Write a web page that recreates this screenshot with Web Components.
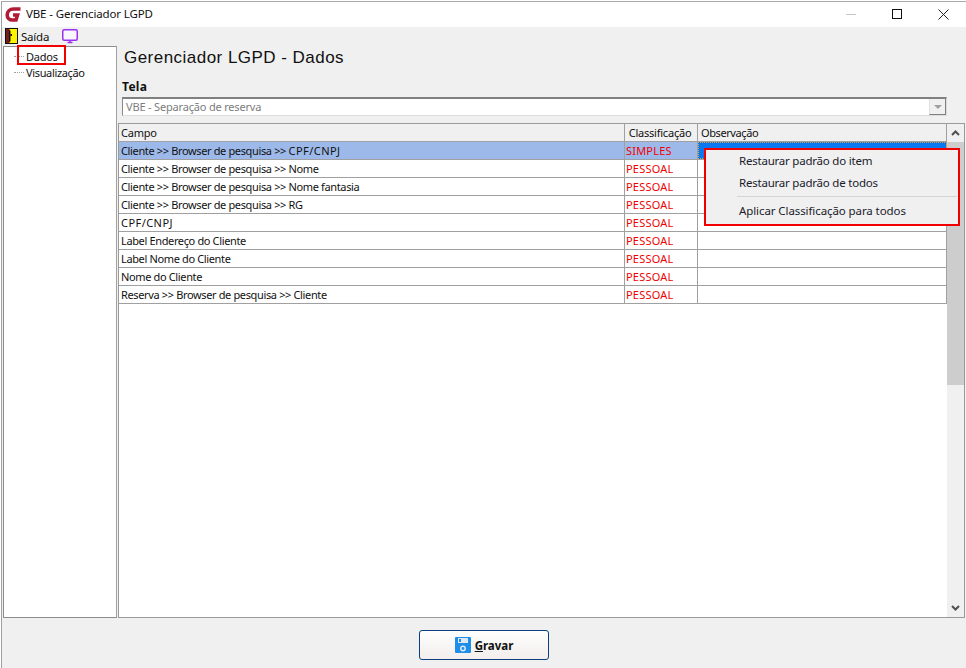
<!DOCTYPE html>
<html lang="pt">
<head>
<meta charset="utf-8">
<title>VBE - Gerenciador LGPD</title>
<style>
html, body { margin: 0; padding: 0; background: #fff; }
body { font-family: "Noto Sans", "Liberation Sans", sans-serif; font-size: 11px; letter-spacing: -.22px; color: #000; }
</style>
</head>
<body>
<lgpd-window>
  <title-bar slot="title">VBE - Gerenciador LGPD</title-bar>
  <tool-bar slot="tools"></tool-bar>
  <tree-pane slot="tree"></tree-pane>
  <dados-panel slot="content"></dados-panel>
  <save-footer slot="footer"></save-footer>
</lgpd-window>

<script>
class LgpdWindow extends HTMLElement {
    connectedCallback() {
        this.attachShadow({ mode: 'open' });
        this.shadowRoot.innerHTML = `
            <style>
                :host {
                    display: flex;
                    flex-direction: column;
                    box-sizing: border-box;
                    width: 966px;
                    height: 668px;
                    padding: 1px 0 0 1px;
                    overflow: hidden;
                }
                .frame {
                    flex: 1;
                    display: flex;
                    flex-direction: column;
                    min-height: 0;
                    border-top: 1px solid #a8a8a8;
                    border-left: 1px solid #a0a0a0;
                    background: #f0f0f0;
                }
                .main {
                    display: flex;
                    gap: 1px;
                    height: 572px;
                    padding-left: 1px;
                }
            </style>
            <div class="frame">
                <slot name="title"></slot>
                <slot name="tools"></slot>
                <div class="main">
                    <slot name="tree"></slot>
                    <slot name="content"></slot>
                </div>
                <slot name="footer"></slot>
            </div>
        `;
    }
}

class TitleBar extends HTMLElement {
    connectedCallback() {
        this.attachShadow({ mode: 'open' });
        this.shadowRoot.innerHTML = `
            <style>
                :host {
                    display: flex;
                    align-items: center;
                    height: 25px;
                    background: #fff;
                    font-size: 11.5px;
                    letter-spacing: -.13px;
                    color: #111;
                }
                .logo { margin: 0 4px 0 3px; display: block; }
                .title { flex: 1; padding-bottom: 2px; }
                .btns { display: flex; height: 100%; }
                .btn { width: 46px; display: flex; align-items: center; justify-content: center; }
            </style>
            <svg class="logo" width="17" height="17" viewBox="0 0 17 17">
                <path d="M15.500 3H8.500C4.800 3 2.200 5.500 2.200 9c0 3 2.200 5 5.300 5h3.500l1.500-5H8" fill="none" stroke="#b01c36" stroke-width="3.600"/>
            </svg>
            <span class="title"><slot></slot></span>
            <div class="btns">
                <div class="btn"><svg width="11" height="11"><path d="M0 5.500h10" stroke="#c4c4c4"/></svg></div>
                <div class="btn"><svg width="11" height="11"><rect x=".5" y=".5" width="9" height="9" fill="none" stroke="#111"/></svg></div>
                <div class="btn"><svg width="11" height="11"><path d="M.5.500l10 10M10.500.500l-10 10" stroke="#222"/></svg></div>
            </div>
        `;
    }
}

class ToolBar extends HTMLElement {
    connectedCallback() {
        this.attachShadow({ mode: 'open' });
        this.shadowRoot.innerHTML = `
            <style>
                :host {
                    display: flex;
                    align-items: center;
                    gap: 13px;
                    height: 18px;
                    padding-left: 3px;
                    margin-bottom: 1px;
                    background: #f0f0f0;
                }
                .exit { display: flex; align-items: center; gap: 3px; font-size: 11.5px; color: #111; }
                svg { display: block; }
            </style>
            <div class="exit">
                <svg width="13" height="16" viewBox="0 0 13 16">
                    <rect width="13" height="16" fill="#111"/>
                    <rect x="1" y="1" width="3" height="14" fill="#7a1c14"/>
                    <path d="M4 1h8v14H4l1.500-2V3z" fill="#fff200"/>
                    <rect x="5.500" y="6" width="1.500" height="2" fill="#111"/>
                </svg>
                <span>Saída</span>
            </div>
            <svg width="16" height="15" viewBox="0 0 16 15">
                <rect x=".75" y=".75" width="14.500" height="10.500" rx="1.500" fill="#f8f6fc" stroke="#9a30f0" stroke-width="1.500"/>
                <path d="M5.500 13.500h5M8 11v2" stroke="#9a30f0" stroke-width="1.500"/>
            </svg>
        `;
    }
}

class TreePane extends HTMLElement {
    connectedCallback() {
        this.attachShadow({ mode: 'open' });
        this.shadowRoot.innerHTML = `
            <style>
                :host {
                    display: block;
                    position: relative;
                    box-sizing: border-box;
                    width: 114px;
                    height: 572px;
                    background: #fff;
                    border: 1px solid #8c8c8c;
                    border-right-color: #a0a0a0;
                    padding-top: 1px;
                }
                .node {
                    display: flex;
                    align-items: center;
                    height: 16px;
                    padding-left: 10px;
                    color: #111;
                }
                .dots { width: 10px; border-top: 1px dotted #a0a0a0; margin-right: 2px; }
                .v { letter-spacing: -.35px; }
                .mark {
                    position: absolute;
                    left: 13px;
                    top: -2px;
                    box-sizing: border-box;
                    width: 49px;
                    height: 20px;
                    border: 2px solid #f00000;
                }
            </style>
            <div class="node"><span class="dots"></span>Dados</div>
            <div class="node v"><span class="dots"></span>Visualização</div>
            <div class="mark"></div>
        `;
    }
}

class DadosPanel extends HTMLElement {
    connectedCallback() {
        this.attachShadow({ mode: 'open' });
        this.shadowRoot.innerHTML = `
            <style>
                :host {
                    display: flex;
                    flex-direction: column;
                    flex: 1;
                    min-width: 0;
                    height: 572px;
                }
                h1 {
                    margin: 0;
                    padding: 2px 0 0 6px;
                    height: 31px;
                    box-sizing: border-box;
                    font: 400 17px "Liberation Sans", sans-serif;
                    letter-spacing: .47px;
                    color: #111;
                }
                .label {
                    padding-left: 4px;
                    height: 18px;
                    margin-top: 1px;
                    font-weight: 700;
                    font-size: 12px;
                    letter-spacing: .3px;
                    color: #111;
                }
                .combo {
                    display: flex;
                    align-items: center;
                    box-sizing: border-box;
                    margin: 1px 19px 0 4px;
                    height: 19px;
                    background: #fff;
                    border: 1px solid #8a8a8a;
                    border-top: 2px solid #808080;
                    border-bottom-color: #ddd;
                    border-right-color: #ddd;
                    padding-left: 3px;
                    color: #7d7d7d;
                }
                .combo span { flex: 1; padding-bottom: 2px; letter-spacing: -.18px; }
                .arrow {
                    box-sizing: border-box;
                    width: 17px;
                    height: 16px;
                    background: #f0f0f0;
                    border-right: 1px solid #808080;
                    border-bottom: 1px solid #808080;
                    border-left: 1px solid #e0e0e0;
                    display: flex;
                    align-items: center;
                    justify-content: center;
                }
                .tri { width: 0; height: 0; border: 4px solid transparent; border-top: 4px solid #a0a0a0; border-bottom: 0; }
                data-grid { margin-top: 7px; }
            </style>
            <h1>Gerenciador LGPD - Dados</h1>
            <div class="label">Tela</div>
            <div class="combo"><span>VBE - Separação de reserva</span><div class="arrow"><div class="tri"></div></div></div>
            <data-grid></data-grid>
        `;
    }
}

const GRID_ROWS = [
    ['Cliente >> Browser de pesquisa >> CPF/CNPJ', 'SIMPLES'],
    ['Cliente >> Browser de pesquisa >> Nome', 'PESSOAL'],
    ['Cliente >> Browser de pesquisa >> Nome fantasia', 'PESSOAL'],
    ['Cliente >> Browser de pesquisa >> RG', 'PESSOAL'],
    ['CPF/CNPJ', 'PESSOAL'],
    ['Label Endereço do Cliente', 'PESSOAL'],
    ['Label Nome do Cliente', 'PESSOAL'],
    ['Nome do Cliente', 'PESSOAL'],
    ['Reserva >> Browser de pesquisa >> Cliente', 'PESSOAL']
];

class DataGrid extends HTMLElement {
    connectedCallback() {
        this.attachShadow({ mode: 'open' });
        // caps run wider than lowercase in the original font, hence the span
        const label = campo => campo.replace(/>/g, '&gt;').replace('CPF/CNPJ', '<span class="caps">CPF/CNPJ</span>');
        const rows = GRID_ROWS.map(([campo, classe], i) => `
            <div class="row${i === 0 ? ' sel' : ''}">
                <div class="cell campo">${label(campo)}</div>
                <div class="cell red">${classe}</div>
                <div class="cell obs"></div>
            </div>`).join('');
        this.shadowRoot.innerHTML = `
            <style>
                :host {
                    display: flex;
                    position: relative;
                    box-sizing: border-box;
                    flex: 1;
                    min-height: 0;
                    background: #fff;
                    border: 1px solid #9a9a9a;
                    margin-right: 1px;
                }
                .body { flex: 1; min-width: 0; }
                .row {
                    display: grid;
                    grid-template-columns: 506px 73px 249px;
                    height: 18px;
                    box-sizing: border-box;
                    border-bottom: 1px solid #a0a0a0;
                    color: #111;
                }
                .cell {
                    box-sizing: border-box;
                    padding-left: 2px;
                    line-height: 18px;
                    height: 17px;
                    border-right: 1px solid #a0a0a0;
                    white-space: nowrap;
                    overflow: hidden;
                }
                .campo { letter-spacing: -.36px; }
                .caps { letter-spacing: .45px; }
                .head { background: #f0f0f0; }
                .head .mid { padding: 0 2px 0 0; text-align: center; }
                .head .last { padding-left: 3px; letter-spacing: -.4px; }
                .red { color: #f00000; padding-left: 1px; letter-spacing: .2px; }
                .sel .cell { background: #9db9e9; }
                .sel .obs { background: #0a78f0; outline: 1px dotted #e8a030; outline-offset: -1px; }
                .bar {
                    width: 17px;
                    display: flex;
                    flex-direction: column;
                    background: #f0f0f0;
                }
                .step { height: 18px; display: flex; align-items: center; justify-content: center; }
                .thumb { height: 243px; background: #cdcdcd; }
                .fill { flex: 1; }
                context-menu { position: absolute; left: 585px; top: 24px; }
            </style>
            <div class="body">
                <div class="row head">
                    <div class="cell">Campo</div>
                    <div class="cell mid">Classificação</div>
                    <div class="cell last">Observação</div>
                </div>
                ${rows}
            </div>
            <div class="bar">
                <div class="step"><svg width="9" height="6"><path d="M1 5l3.500-3.500L8 5" fill="none" stroke="#505050" stroke-width="2"/></svg></div>
                <div class="thumb"></div>
                <div class="fill"></div>
                <div class="step"><svg width="9" height="6"><path d="M1 1l3.500 3.500L8 1" fill="none" stroke="#505050" stroke-width="2"/></svg></div>
            </div>
            <context-menu></context-menu>
        `;
    }
}

class ContextMenu extends HTMLElement {
    connectedCallback() {
        this.attachShadow({ mode: 'open' });
        this.shadowRoot.innerHTML = `
            <style>
                :host {
                    display: block;
                    box-sizing: border-box;
                    width: 256px;
                    height: 78px;
                    background: #f0f0f0;
                    border: 2px solid #f00000;
                    font-size: 11.5px;
                    color: #1a1a2a;
                }
                .item { height: 22px; line-height: 22px; padding-left: 33px; }
                .item:first-child { margin-top: 1px; }
                .item:last-child { letter-spacing: -.09px; }
                hr { border: 0; border-top: 1px solid #d4d4d4; margin: 2px 1px 3px 31px; }
            </style>
            <div class="item">Restaurar padrão do item</div>
            <div class="item">Restaurar padrão de todos</div>
            <hr>
            <div class="item">Aplicar Classificação para todos</div>
        `;
    }
}

class SaveFooter extends HTMLElement {
    connectedCallback() {
        this.attachShadow({ mode: 'open' });
        this.shadowRoot.innerHTML = `
            <style>
                :host {
                    display: flex;
                    justify-content: center;
                    padding-top: 12px;
                }
                button {
                    display: flex;
                    align-items: center;
                    justify-content: center;
                    gap: 4px;
                    box-sizing: border-box;
                    width: 130px;
                    height: 30px;
                    padding: 0;
                    border: 1px solid #0a3f80;
                    border-radius: 3px;
                    background: linear-gradient(#fff, #f1eeeb);
                    font: 700 11.5px "Noto Sans", "Liberation Sans", sans-serif;
                    letter-spacing: 0;
                    color: #111;
                }
                svg { display: block; }
            </style>
            <button>
                <svg width="16" height="16" viewBox="0 0 16 16">
                    <rect width="16" height="16" rx="1" fill="#1e8ee8"/>
                    <rect x="3" y="1" width="10" height="5" fill="#dce8f4"/>
                    <rect x="4" y="2" width="2" height="3" fill="#1e8ee8"/>
                    <circle cx="8" cy="11.500" r="2.200" fill="none" stroke="#dce8f4" stroke-width="1.500"/>
                </svg>
                <span><u>G</u>ravar</span>
            </button>
        `;
    }
}

customElements.define('lgpd-window', LgpdWindow);
customElements.define('title-bar', TitleBar);
customElements.define('tool-bar', ToolBar);
customElements.define('tree-pane', TreePane);
customElements.define('dados-panel', DadosPanel);
customElements.define('data-grid', DataGrid);
customElements.define('context-menu', ContextMenu);
customElements.define('save-footer', SaveFooter);
</script>
</body>
</html>
